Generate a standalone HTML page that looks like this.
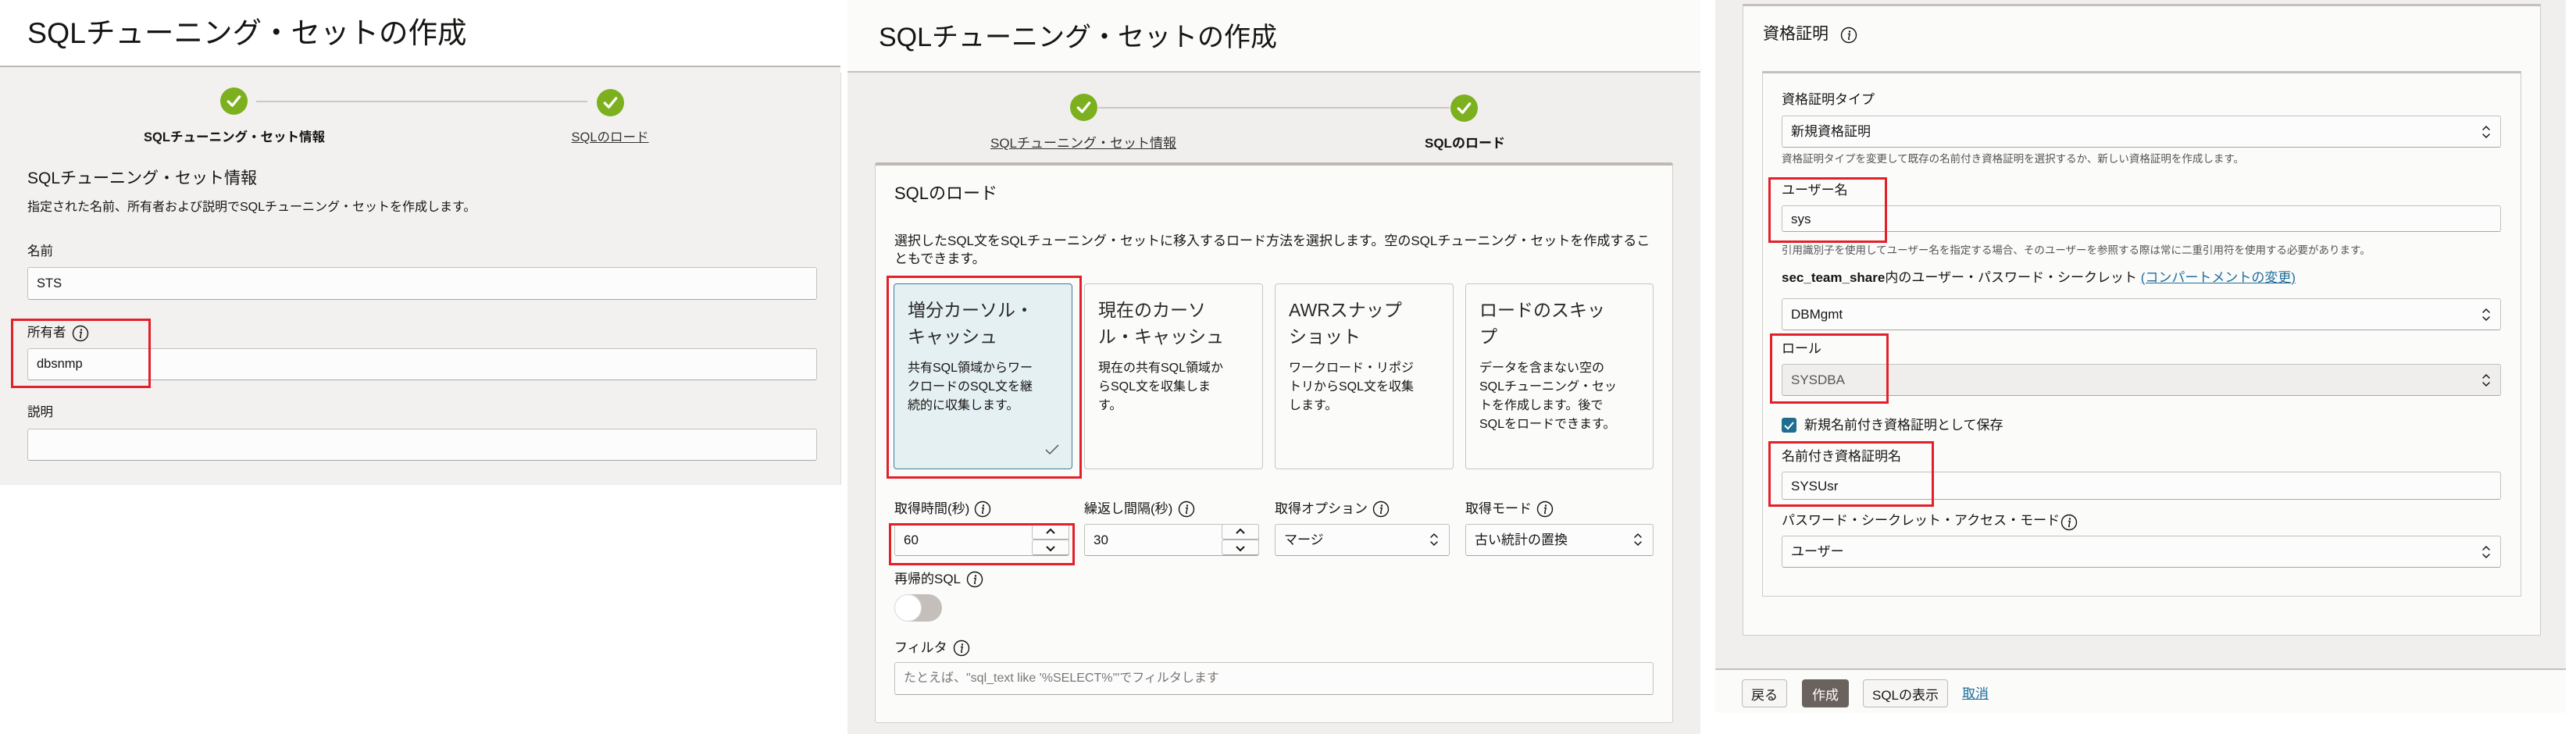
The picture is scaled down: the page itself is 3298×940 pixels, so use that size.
<!DOCTYPE html>
<html><head><meta charset="utf-8">
<style>
*{margin:0;padding:0;box-sizing:border-box}
body{width:3298px;height:940px;background:#fff;position:relative;overflow:hidden;font-family:"Liberation Sans","Noto Sans CJK JP",sans-serif;color:#161513}
.a{position:absolute}
.t{position:absolute;white-space:nowrap;line-height:1}
.inp{position:absolute;background:#fcfcfc;border:1px solid #c4c1bd;border-bottom-color:#a9a6a2;border-radius:3px}
.red{position:absolute;border:3px solid #e3202a}
.line{position:absolute;height:2px;background:#cbc8c4}
.card{position:absolute;background:#fbfbfa;border:1px solid #c9c6c2;border-radius:4px}
.btn{position:absolute;border:1px solid #bdb9b5;border-radius:4px;background:#f7f6f5;font-size:17px;display:flex;align-items:center;justify-content:center}
</style></head><body>
<svg width="0" height="0" style="position:absolute"><defs>
<symbol id="chk" viewBox="0 0 34 34"><circle cx="17" cy="17" r="17" fill="#7cb01f"/><path d="M10 17.5l5 5 9-11" stroke="#fff" stroke-width="3.2" fill="none" stroke-linecap="round" stroke-linejoin="round"/></symbol>
<symbol id="info" viewBox="0 0 22 22"><circle cx="11" cy="11" r="9.5" fill="none" stroke="#161513" stroke-width="1.4"/><circle cx="12" cy="6.5" r="1.2" fill="#161513"/><path d="M10.5 9.5h1.7l-1.5 6.2q-.2 1 .8.6" stroke="#161513" stroke-width="1.4" fill="none" stroke-linecap="round"/></symbol>
<symbol id="ud" viewBox="0 0 12 22"><path d="M2 8l4-4 4 4M2 14l4 4 4-4" stroke="#161513" stroke-width="1.5" fill="none" stroke-linecap="round"/></symbol>
</defs></svg>

<!-- PANEL 1 -->
<div class="a" style="left:0;top:0;width:1076px;height:86px;background:#fff;border-bottom:2px solid #bcb9b5"></div>
<div class="a" style="left:0;top:86px;width:1076px;height:535px;background:#f2f1f0"></div>
<div class="a" style="left:1076px;top:93px;width:1px;height:528px;background:#ddd"></div>
<div class="t" style="left:35px;top:24px;font-size:37.5px">SQLチューニング・セットの作成</div>
<svg class="a" style="left:282px;top:112px" width="35" height="35"><use href="#chk"/></svg>
<div class="line" style="left:328px;top:129px;width:424px"></div>
<svg class="a" style="left:764px;top:114px" width="35" height="35"><use href="#chk"/></svg>
<div class="t" style="left:170px;top:168px;font-size:16.5px;font-weight:bold;width:260px;text-align:center">SQLチューニング・セット情報</div>
<div class="t" style="left:731px;top:168px;font-size:16.5px;width:100px;text-align:center;text-decoration:underline;color:#333">SQLのロード</div>
<div class="t" style="left:35px;top:218px;font-size:21px">SQLチューニング・セット情報</div>
<div class="t" style="left:35px;top:258px;font-size:16px">指定された名前、所有者および説明でSQLチューニング・セットを作成します。</div>
<div class="t" style="left:35px;top:314px;font-size:16.5px">名前</div>
<div class="inp" style="left:35px;top:342px;width:1011px;height:42px"></div>
<div class="t" style="left:47px;top:355px;font-size:16.5px">STS</div>
<div class="t" style="left:35px;top:418px;font-size:16.5px">所有者</div>
<svg class="a" style="left:92px;top:416px" width="22" height="22"><use href="#info"/></svg>
<div class="inp" style="left:35px;top:446px;width:1011px;height:41px"></div>
<div class="t" style="left:47px;top:458px;font-size:16.5px">dbsnmp</div>
<div class="red" style="left:14px;top:408px;width:179px;height:89px"></div>
<div class="t" style="left:35px;top:520px;font-size:16.5px">説明</div>
<div class="inp" style="left:35px;top:549px;width:1011px;height:41px"></div>

<!-- PANEL 2 -->
<div class="a" style="left:1085px;top:0;width:1092px;height:940px;background:#f1efed"></div>
<div class="a" style="left:1085px;top:0;width:1092px;height:93px;background:#fbfbfa;border-bottom:2px solid #c4c1bd"></div>
<div class="t" style="left:1125px;top:31px;font-size:34px">SQLチューニング・セットの作成</div>
<svg class="a" style="left:1370px;top:120px" width="35" height="35"><use href="#chk"/></svg>
<div class="line" style="left:1406px;top:137px;width:450px"></div>
<svg class="a" style="left:1857px;top:121px" width="35" height="35"><use href="#chk"/></svg>
<div class="t" style="left:1258px;top:175px;font-size:17px;width:258px;text-align:center;text-decoration:underline;color:#333">SQLチューニング・セット情報</div>
<div class="t" style="left:1824px;top:175px;font-size:17px;font-weight:bold;width:100px;text-align:center">SQLのロード</div>
<div class="a" style="left:1120px;top:208px;width:1022px;height:718px;background:#fbfbfa;border:1px solid #d0cdca;border-top:4px solid #bdbab6;border-radius:3px"></div>
<div class="t" style="left:1145px;top:237px;font-size:22px">SQLのロード</div>
<div class="t" style="left:1145px;top:297px;font-size:17px;line-height:23px;width:975px;white-space:normal">選択したSQL文をSQLチューニング・セットに移入するロード方法を選択します。空のSQLチューニング・セットを作成することもできます。</div>
<div class="card" style="left:1144px;top:363px;width:229px;height:238px;background:#e5f0f3;border-color:#3f7d98"></div>
<div class="card" style="left:1388px;top:363px;width:229px;height:238px"></div>
<div class="card" style="left:1632px;top:363px;width:229px;height:238px"></div>
<div class="card" style="left:1876px;top:363px;width:241px;height:238px"></div>
<div class="t" style="left:1162px;top:380px;font-size:23px;line-height:34px;color:#2a2927">増分カーソル・<br>キャッシュ</div>
<div class="t" style="left:1406px;top:380px;font-size:23px;line-height:34px;color:#2a2927">現在のカーソ<br>ル・キャッシュ</div>
<div class="t" style="left:1650px;top:380px;font-size:23px;line-height:34px;color:#2a2927">AWRスナップ<br>ショット</div>
<div class="t" style="left:1894px;top:380px;font-size:23px;line-height:34px;color:#2a2927">ロードのスキッ<br>プ</div>
<div class="t" style="left:1162px;top:460px;font-size:16px;line-height:24px">共有SQL領域からワー<br>クロードのSQL文を継<br>続的に収集します。</div>
<div class="t" style="left:1406px;top:460px;font-size:16px;line-height:24px">現在の共有SQL領域か<br>らSQL文を収集しま<br>す。</div>
<div class="t" style="left:1650px;top:460px;font-size:16px;line-height:24px">ワークロード・リポジ<br>トリからSQL文を収集<br>します。</div>
<div class="t" style="left:1894px;top:460px;font-size:16px;line-height:24px">データを含まない空の<br>SQLチューニング・セッ<br>トを作成します。後で<br>SQLをロードできます。</div>
<svg class="a" style="left:1337px;top:568px" width="20" height="16"><path d="M2 8l5 5 11-11" stroke="#555" stroke-width="1.5" fill="none"/></svg>
<div class="red" style="left:1135px;top:353px;width:250px;height:260px"></div>
<div class="t" style="left:1145px;top:643px;font-size:17px">取得時間(秒)</div>
<svg class="a" style="left:1247px;top:641px" width="22" height="22"><use href="#info"/></svg>
<div class="t" style="left:1388px;top:643px;font-size:17px">繰返し間隔(秒)</div>
<svg class="a" style="left:1508px;top:641px" width="22" height="22"><use href="#info"/></svg>
<div class="t" style="left:1632px;top:643px;font-size:17px">取得オプション</div>
<svg class="a" style="left:1757px;top:641px" width="22" height="22"><use href="#info"/></svg>
<div class="t" style="left:1876px;top:643px;font-size:17px">取得モード</div>
<svg class="a" style="left:1967px;top:641px" width="22" height="22"><use href="#info"/></svg>
<div class="inp" style="left:1145px;top:671px;width:224px;height:41px"></div>
<div class="t" style="left:1157px;top:683px;font-size:17px">60</div>
<div class="inp" style="left:1321px;top:671px;width:48px;height:20px;border-radius:3px"></div>
<div class="inp" style="left:1321px;top:691px;width:48px;height:20px;border-radius:3px"></div>
<svg class="a" style="left:1338px;top:673px" width="14" height="38"><path d="M2 10l5-5 5 5M2 27l5 5 5-5" stroke="#161513" stroke-width="2" fill="none"/></svg>
<div class="inp" style="left:1388px;top:671px;width:224px;height:41px"></div>
<div class="t" style="left:1400px;top:683px;font-size:17px">30</div>
<div class="inp" style="left:1564px;top:671px;width:48px;height:20px;border-radius:3px"></div>
<div class="inp" style="left:1564px;top:691px;width:48px;height:20px;border-radius:3px"></div>
<svg class="a" style="left:1581px;top:673px" width="14" height="38"><path d="M2 10l5-5 5 5M2 27l5 5 5-5" stroke="#161513" stroke-width="2" fill="none"/></svg>
<div class="red" style="left:1138px;top:670px;width:238px;height:54px"></div>
<div class="inp" style="left:1632px;top:671px;width:224px;height:41px"></div>
<div class="t" style="left:1644px;top:683px;font-size:17px">マージ</div>
<svg class="a" style="left:1830px;top:680px" width="12" height="22"><use href="#ud"/></svg>
<div class="inp" style="left:1876px;top:671px;width:241px;height:41px"></div>
<div class="t" style="left:1888px;top:683px;font-size:17px">古い統計の置換</div>
<svg class="a" style="left:2091px;top:680px" width="12" height="22"><use href="#ud"/></svg>
<div class="t" style="left:1145px;top:733px;font-size:17px">再帰的SQL</div>
<svg class="a" style="left:1237px;top:731px" width="22" height="22"><use href="#info"/></svg>
<div class="a" style="left:1145px;top:761px;width:61px;height:35px;border-radius:18px;background:#c4bfba"></div>
<div class="a" style="left:1145px;top:761px;width:35px;height:35px;border-radius:50%;background:#fff;border:1px solid #ddd"></div>
<div class="t" style="left:1145px;top:821px;font-size:17px">フィルタ</div>
<svg class="a" style="left:1220px;top:819px" width="22" height="22"><use href="#info"/></svg>
<div class="inp" style="left:1145px;top:848px;width:972px;height:42px"></div>
<div class="t" style="left:1157px;top:861px;font-size:16px;color:#7a7672">たとえば、"sql_text like '%SELECT%'"でフィルタします</div>

<!-- PANEL 3 -->
<div class="a" style="left:2196px;top:0;width:1089px;height:856px;background:#f1efed"></div>
<div class="a" style="left:2196px;top:856px;width:1089px;height:57px;background:#fbfbfa;border-top:2px solid #c4c1bd"></div>
<div class="a" style="left:2231px;top:5px;width:1022px;height:809px;background:#fbfbfa;border:1px solid #cfccc9;border-top:3px solid #c4c1bd"></div>
<div class="t" style="left:2257px;top:33px;font-size:21px">資格証明</div>
<svg class="a" style="left:2356px;top:34px" width="22" height="22"><use href="#info"/></svg>
<div class="a" style="left:2256px;top:91px;width:972px;height:673px;background:#fbfbfa;border:1px solid #cfccc9;border-top:3px solid #c4c1bd"></div>
<div class="t" style="left:2281px;top:119px;font-size:17px">資格証明タイプ</div>
<div class="inp" style="left:2281px;top:148px;width:921px;height:41px"></div>
<div class="t" style="left:2293px;top:160px;font-size:17px">新規資格証明</div>
<svg class="a" style="left:3177px;top:158px" width="12" height="22"><use href="#ud"/></svg>
<div class="t" style="left:2281px;top:197px;font-size:13.5px;color:#555">資格証明タイプを変更して既存の名前付き資格証明を選択するか、新しい資格証明を作成します。</div>
<div class="t" style="left:2281px;top:235px;font-size:17px">ユーザー名</div>
<div class="inp" style="left:2281px;top:263px;width:921px;height:34px"></div>
<div class="t" style="left:2293px;top:272px;font-size:17px">sys</div>
<div class="red" style="left:2264px;top:227px;width:152px;height:84px"></div>
<div class="t" style="left:2281px;top:314px;font-size:13.5px;color:#555">引用識別子を使用してユーザー名を指定する場合、そのユーザーを参照する際は常に二重引用符を使用する必要があります。</div>
<div class="t" style="left:2281px;top:347px;font-size:17px"><b>sec_team_share</b>内のユーザー・パスワード・シークレット <span style="color:#1e6d9c;text-decoration:underline">(コンパートメントの変更)</span></div>
<div class="inp" style="left:2281px;top:382px;width:921px;height:41px"></div>
<div class="t" style="left:2293px;top:394px;font-size:17px">DBMgmt</div>
<svg class="a" style="left:3177px;top:392px" width="12" height="22"><use href="#ud"/></svg>
<div class="t" style="left:2281px;top:438px;font-size:17px">ロール</div>
<div class="inp" style="left:2281px;top:466px;width:921px;height:41px;background:#efeeed"></div>
<div class="t" style="left:2293px;top:478px;font-size:17px;color:#555">SYSDBA</div>
<svg class="a" style="left:3177px;top:476px" width="12" height="22"><use href="#ud"/></svg>
<div class="red" style="left:2266px;top:427px;width:152px;height:90px"></div>
<div class="a" style="left:2281px;top:535px;width:19px;height:19px;background:#1f6e8f;border-radius:3px"></div>
<svg class="a" style="left:2281px;top:535px" width="19" height="19"><path d="M4 10l4 4 7-8" stroke="#fff" stroke-width="2" fill="none"/></svg>
<div class="t" style="left:2310px;top:536px;font-size:17px">新規名前付き資格証明として保存</div>
<div class="t" style="left:2281px;top:576px;font-size:17px">名前付き資格証明名</div>
<div class="inp" style="left:2281px;top:604px;width:921px;height:36px"></div>
<div class="t" style="left:2293px;top:614px;font-size:17px">SYSUsr</div>
<div class="red" style="left:2264px;top:565px;width:212px;height:84px"></div>
<div class="t" style="left:2281px;top:658px;font-size:17px">パスワード・シークレット・アクセス・モード</div>
<svg class="a" style="left:2638px;top:658px" width="22" height="22"><use href="#info"/></svg>
<div class="inp" style="left:2281px;top:686px;width:921px;height:41px"></div>
<div class="t" style="left:2293px;top:698px;font-size:17px">ユーザー</div>
<svg class="a" style="left:3177px;top:696px" width="12" height="22"><use href="#ud"/></svg>
<div class="btn" style="left:2230px;top:870px;width:58px;height:36px">戻る</div>
<div class="btn" style="left:2307px;top:870px;width:60px;height:36px;background:#6a625d;border-color:#6a625d;color:#fff">作成</div>
<div class="btn" style="left:2385px;top:870px;width:109px;height:36px">SQLの表示</div>
<div class="t" style="left:2512px;top:880px;font-size:17px;color:#1e6d9c;text-decoration:underline">取消</div>
</body></html>
